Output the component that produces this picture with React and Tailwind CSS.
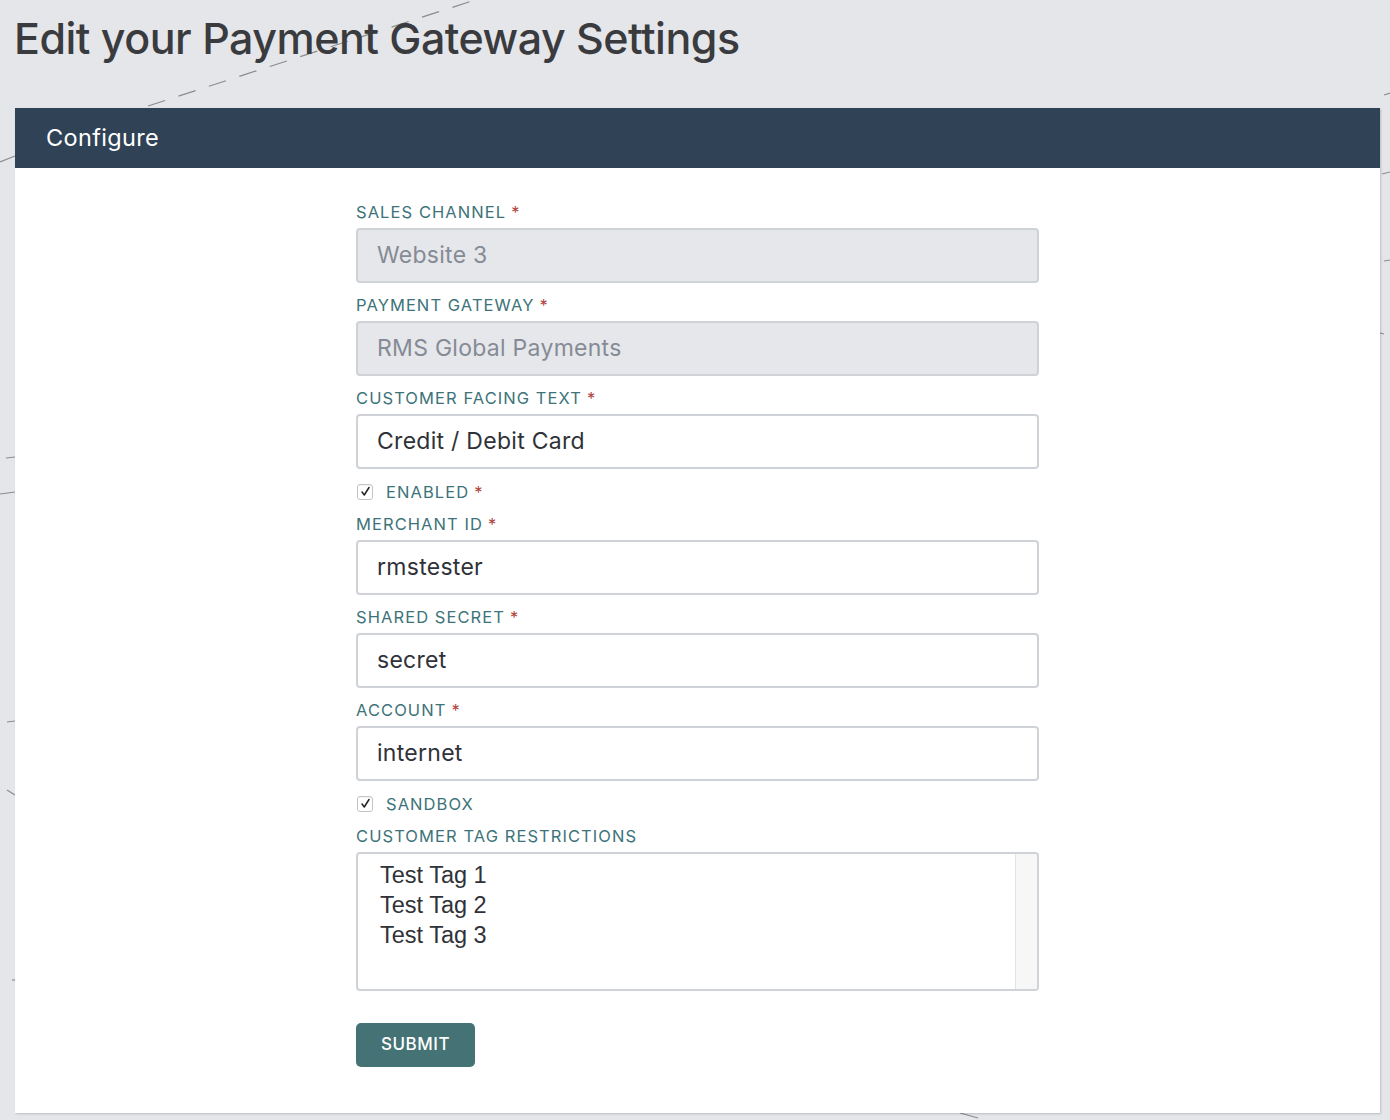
import React from "react";

function Label({ children, required }) {
  return (
    <div className="text-[16.5px] leading-[20px] tracking-[0.065em] uppercase text-[#3d7379]">
      {children}
      {required && <span className="ml-[5px] text-[#b0463f]">*</span>}
    </div>
  );
}

function Field({ label, value, disabled, required = true }) {
  return (
    <div className="flex flex-col gap-[6px]">
      <Label required={required}>{label}</Label>
      <div
        className={
          "h-[55px] rounded-[4px] border-2 border-[#cfd2d6] px-[19px] flex items-center text-[23px] tracking-[0.012em] " +
          (disabled ? "bg-[#e6e7eb] text-[#858b95]" : "bg-white text-[#2f3238]")
        }
      >
        {value}
      </div>
    </div>
  );
}

function Check({ label, required }) {
  return (
    <div className="flex items-center gap-[13px] h-[21px]">
      <div className="w-[16px] h-[16px] ml-[1px] rounded-[3px] border border-[#c2c4c8] bg-white flex items-center justify-center shadow-[inset_0_1px_1px_rgba(0,0,0,0.05)]">
        <svg width="11" height="11" viewBox="0 0 11 11">
          <path d="M2 6 L4.3 9 L9 1.5" fill="none" stroke="#222" strokeWidth="1.5" strokeLinecap="round" strokeLinejoin="round" />
        </svg>
      </div>
      <Label required={required}>{label}</Label>
    </div>
  );
}

export default function App() {
  return (
    <div
      className="relative min-h-[1120px] bg-[#e5e6ea] overflow-hidden"
      style={{ fontFamily: "Inter, 'Noto Sans', sans-serif" }}
    >
      <svg className="absolute inset-0 z-0" width="1390" height="1120" viewBox="0 0 1390 1120">
        <g stroke="#8a8c90" strokeWidth="1.2" fill="none">
          <line x1="148" y1="106" x2="475" y2="0" strokeDasharray="18 14" />
          <line x1="0" y1="162" x2="15" y2="156" />
          <line x1="0" y1="494" x2="15" y2="492" />
          <line x1="6" y1="458" x2="15" y2="457" />
          <line x1="7" y1="722" x2="15" y2="721" />
          <line x1="7" y1="790" x2="15" y2="795" />
          <line x1="12" y1="980" x2="15" y2="980" />
          <line x1="1384" y1="95" x2="1390" y2="93" />
          <line x1="1382" y1="174" x2="1390" y2="172" />
          <line x1="1384" y1="261" x2="1390" y2="260" />
          <line x1="1380" y1="333" x2="1384" y2="334" />
          <line x1="960" y1="1113" x2="978" y2="1118" />
        </g>
      </svg>

      <div className="relative z-10 px-[15px] pt-[10px]">
        <h1 className="text-[43px] leading-[56px] font-medium text-[#3a3b3e] tracking-[-0.012em] -ml-[1px]">
          Edit your Payment Gateway Settings
        </h1>

        <div className="mt-[42px] w-[1365px] bg-white shadow-[1px_1px_2px_rgba(0,0,0,0.18)]">
          <div className="h-[60px] bg-[#2f4256] flex items-center px-[31px]">
            <span className="text-[23.5px] text-white tracking-[0.015em]">Configure</span>
          </div>

          <div className="pl-[341px] pt-[34px] pb-[46px]">
            <div className="w-[683px] flex flex-col gap-[12px]">
              <Field label="Sales Channel" value="Website 3" disabled />
              <Field label="Payment Gateway" value="RMS Global Payments" disabled />
              <Field label="Customer Facing Text" value="Credit / Debit Card" />
              <Check label="Enabled" required />
              <Field label="Merchant ID" value="rmstester" />
              <Field label="Shared Secret" value="secret" />
              <Field label="Account" value="internet" />
              <Check label="Sandbox" />
              <div className="flex flex-col gap-[6px]">
                <Label>Customer Tag Restrictions</Label>
                <div className="h-[139px] rounded-[4px] border-2 border-[#cfd2d6] bg-white flex overflow-hidden">
                  <div
                    className="flex-1 pl-[22px] pt-[6px] text-[23.5px] leading-[30px] text-[#2f3238]"
                    style={{ fontFamily: "'Liberation Sans', Arial, sans-serif" }}
                  >
                    <div>Test Tag 1</div>
                    <div>Test Tag 2</div>
                    <div>Test Tag 3</div>
                  </div>
                  <div className="w-[22px] border-l border-[#e3e3e3] bg-[#f7f7f7]" />
                </div>
              </div>
              <div className="pt-[20px]">
                <button className="w-[119px] h-[44px] rounded-[5px] bg-[#447275] text-white text-[17px] font-medium tracking-[0.03em]">
                  SUBMIT
                </button>
              </div>
            </div>
          </div>
        </div>
      </div>
    </div>
  );
}
